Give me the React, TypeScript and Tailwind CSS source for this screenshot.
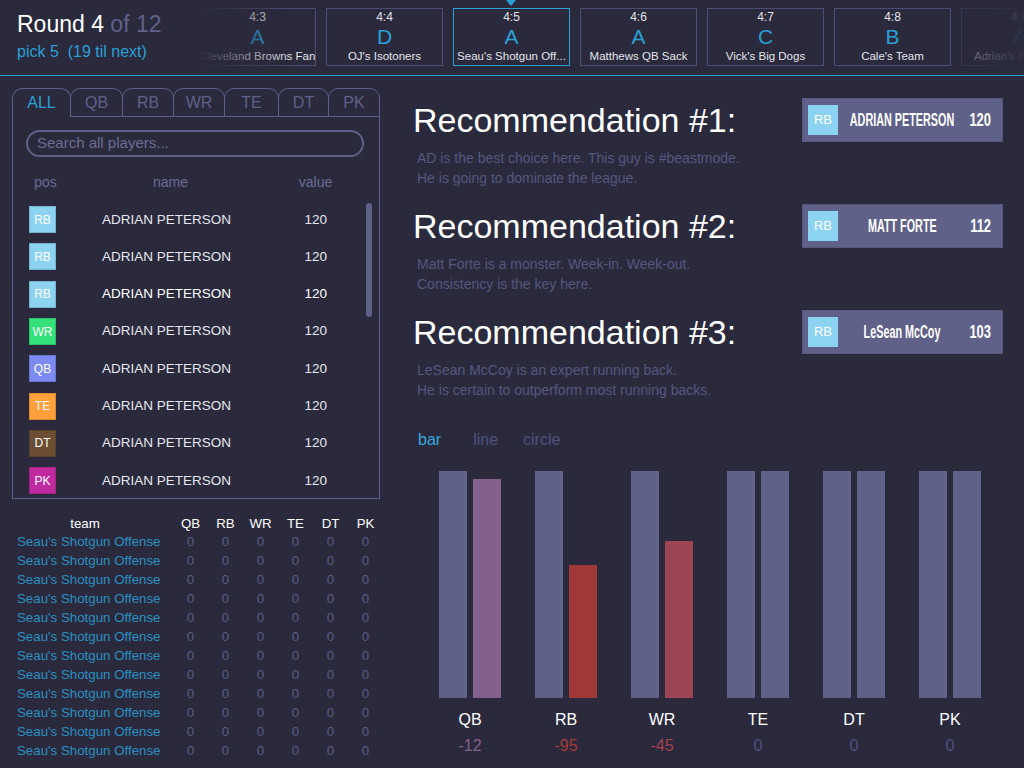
import React from 'react'

// draft board — round header, player list, recommendations and the positional bar chart

const picks = [
  { n: '4:3', grade: 'A', team: 'Cleveland Browns Fan' },
  { n: '4:4', grade: 'D', team: "OJ's Isotoners" },
  { n: '4:5', grade: 'A', team: "Seau's Shotgun Off...", active: true },
  { n: '4:6', grade: 'A', team: 'Matthews QB Sack' },
  { n: '4:7', grade: 'C', team: "Vick's Big Dogs" },
  { n: '4:8', grade: 'B', team: "Cale's Team" },
  { n: '4:9', grade: 'A', team: "Adrian's Big Dogs" },
]

const tabs = [
  { label: 'ALL', w: 'w-[59px]' },
  { label: 'QB', w: 'w-[53px]' },
  { label: 'RB', w: 'w-[52px]' },
  { label: 'WR', w: 'w-[52px]' },
  { label: 'TE', w: 'w-[55px]' },
  { label: 'DT', w: 'w-[51px]' },
  { label: 'PK', w: 'w-[52px]' },
]

const badge: Record<string, string> = {
  RB: 'bg-[#8cd3f2]',
  WR: 'bg-[#34e07a]',
  QB: 'bg-[#7c8bf2]',
  TE: 'bg-[#ffa03a]',
  DT: 'bg-[#6b4e33]',
  PK: 'bg-[#c12a9e]',
}

const players = ['RB', 'RB', 'RB', 'WR', 'QB', 'TE', 'DT', 'PK']

const recs = [
  {
    pos: 'RB',
    name: 'ADRIAN PETERSON',
    value: 120,
    lines: ['AD is the best choice here. This guy is #beastmode.', 'He is going to dominate the league.'],
  },
  {
    pos: 'RB',
    name: 'MATT FORTE',
    value: 112,
    lines: ['Matt Forte is a monster. Week-in. Week-out.', 'Consistency is the key here.'],
  },
  {
    pos: 'RB',
    name: 'LeSean McCoy',
    value: 103,
    lines: ['LeSean McCoy is an expert running back.', 'He is certain to outperform most running backs.'],
  },
]

const chart = [
  { pos: 'QB', h: 219, bar: 'bg-[#84608c]', text: 'text-[#84608c]', delta: '-12' },
  { pos: 'RB', h: 133, bar: 'bg-[#a03838]', text: 'text-[#a83a3a]', delta: '-95' },
  { pos: 'WR', h: 157, bar: 'bg-[#9e4555]', text: 'text-[#a84050]', delta: '-45' },
  { pos: 'TE', h: 227, bar: 'bg-[#5f6189]', text: 'text-[#4f5180]', delta: '0' },
  { pos: 'DT', h: 227, bar: 'bg-[#5f6189]', text: 'text-[#4f5180]', delta: '0' },
  { pos: 'PK', h: 227, bar: 'bg-[#5f6189]', text: 'text-[#4f5180]', delta: '0' },
]

const cols = ['QB', 'RB', 'WR', 'TE', 'DT', 'PK']

function PickCard({ n, grade, team, active }: { n: string; grade: string; team: string; active?: boolean }) {
  return (
    <div
      className={`w-[117px] h-[58px] shrink-0 border flex flex-col items-center ${
        active ? 'border-[#2a9fd6]' : 'border-[#4b4d74]'
      }`}
    >
      <div className="pt-[1px] text-[12px] leading-[14px] text-[#e4e4ea]">{n}</div>
      <div className="mt-[1px] text-[21px] leading-[24px] text-[#2a9fd6]">{grade}</div>
      <div className="text-[11.5px] leading-[14px] text-[#e4e4ea] whitespace-nowrap">{team}</div>
    </div>
  )
}

export default function App() {
  return (
    <div className="w-[1024px] h-[768px] overflow-hidden bg-[#2a2a3c] font-['Liberation_Sans',Arial,sans-serif]">
      {/* header */}
      <header className="h-[76px] border-b border-[#2a9fd6] flex">
        <div className="w-[199px] shrink-0 pl-[17px] pt-[10px]">
          <div className="text-[23px] leading-[28px] text-white whitespace-nowrap">
            Round 4 <span className="text-[#5f6189]">of 12</span>
          </div>
          <div className="mt-[4px] text-[16px] leading-[20px] text-[#2a9fd6] whitespace-pre">pick 5  (19 til next)</div>
        </div>
        <div className="relative flex-1 overflow-hidden">
          <div className="flex gap-[10px] pt-[8px]">
            {picks.map((p) => (
              <PickCard key={p.n} {...p} />
            ))}
          </div>
          <div className="absolute left-[307px] top-0 w-0 h-0 border-l-[5px] border-r-[5px] border-t-[6px] border-l-transparent border-r-transparent border-t-[#2a9fd6]" />
          <div className="absolute left-0 top-0 w-[95px] h-[74px] bg-linear-to-r from-[#2a2a3c] to-[#2a2a3c]/0" />
          <div className="absolute right-0 top-0 w-[66px] h-[74px] bg-linear-to-r from-[#2a2a3c]/60 to-[#2a2a3c]/95" />
        </div>
      </header>

      <div className="flex">
        {/* left column */}
        <div className="w-[380px] shrink-0 pl-[12px] pt-[12px]">
          <div className="flex h-[29px]">
            {tabs.map((t, i) => (
              <div
                key={t.label}
                className={`${t.w} h-[29px] rounded-t-[10px] border-t border-x border-[#5d5f88] flex items-center justify-center text-[16px] ${
                  i === 0 ? 'text-[#2a9fd6]' : 'border-b -ml-px text-[#5f6189]'
                }`}
              >
                {t.label}
              </div>
            ))}
          </div>
          <div className="relative w-[368px] h-[382px] pt-[13px] border-x border-b border-[#5d5f88]">
            <div className="ml-[13px] mr-[15px] h-[27px] rounded-full border-2 border-[#5f6189] pl-[9px] flex items-center text-[15px] text-[#6a6c95]">
              Search all players...
            </div>
            <div className="mt-[16px] flex pl-[8px] text-[14px] leading-[18px] text-[#6a6c95]">
              <div className="w-[49px] text-center">pos</div>
              <div className="w-[201px] text-center">name</div>
              <div className="w-[89px] text-center">value</div>
            </div>
            <div className="mt-[10px]">
              {players.map((pos, i) => (
                <div key={i} className="h-[37.3px] flex items-center pl-[16px]">
                  <div
                    className={`w-[27px] h-[27px] shrink-0 border border-black/15 flex items-center justify-center text-[12px] text-white ${badge[pos]}`}
                  >
                    {pos}
                  </div>
                  <div className={`ml-[46px] w-[180px] text-[13.5px] ${i === 2 ? 'text-white' : 'text-[#e6e6ee]'}`}>
                    ADRIAN PETERSON
                  </div>
                  <div className={`w-[45px] text-right text-[13.5px] ${i === 2 ? 'text-white' : 'text-[#e6e6ee]'}`}>
                    120
                  </div>
                </div>
              ))}
            </div>
            <div className="absolute right-[7px] top-[86px] w-[6px] h-[114px] rounded-full bg-[#5f6189]" />
          </div>

          {/* team table */}
          <div className="mt-[15px] -ml-[12px] pl-[17px] grid grid-cols-[156px_repeat(6,35px)] text-[13.3px]">
            <div className="h-[18px] pr-[20px] text-center text-white">team</div>
            {cols.map((c) => (
              <div key={c} className="h-[18px] text-center text-white">
                {c}
              </div>
            ))}
            {Array.from({ length: 12 }).map((_, r) => (
              <React.Fragment key={r}>
                <div className="h-[19px] leading-[19px] text-[#2b8fc0] whitespace-nowrap">Seau's Shotgun Offense</div>
                {cols.map((c) => (
                  <div key={c} className="h-[19px] leading-[19px] text-center text-[#5a5c85]">
                    0
                  </div>
                ))}
              </React.Fragment>
            ))}
          </div>
        </div>

        {/* right column */}
        <div className="flex-1 pt-[22px]">
          {recs.map((r, i) => (
            <div key={i} className="mb-[16px]">
              <div className="h-[44px] flex items-center pl-[33px]">
                <div className="text-[34px] leading-[40px] text-white whitespace-nowrap">Recommendation #{i + 1}:</div>
                <div className="ml-auto mr-[21px] w-[201px] h-[44px] shrink-0 bg-[#5f6189] border border-[#55577c] flex items-center pl-[5px] pr-[11px]">
                  <div className="w-[30px] h-[30px] shrink-0 bg-[#8cd3f2] flex items-center justify-center text-[13px] text-white">
                    {r.pos}
                  </div>
                  <div className="ml-[5px] w-[118px] shrink-0 flex justify-center text-[18px] font-bold text-white whitespace-nowrap">
                    <span className="inline-block shrink-0 scale-x-[0.6]">{r.name}</span>
                  </div>
                  <div className="ml-auto w-[30px] shrink-0 flex justify-end text-[18px] font-bold text-white">
                    <span className="inline-block shrink-0 scale-x-[0.72] origin-right">{r.value}</span>
                  </div>
                </div>
              </div>
              <div className="mt-[6px] pl-[37px] text-[14px] leading-[20px] text-[#55577f]">
                {r.lines.map((l) => (
                  <div key={l}>{l}</div>
                ))}
              </div>
            </div>
          ))}

          {/* chart */}
          <div className="mt-[30px] pl-[38px] flex text-[16px] leading-[20px]">
            <span className="text-[#35a7de]">bar</span>
            <span className="ml-[32px] text-[#4f5180]">line</span>
            <span className="ml-[25px] text-[#4f5180]">circle</span>
          </div>
          <div className="mt-[21px] pl-[42px] flex">
            {chart.map((c) => (
              <div key={c.pos} className="w-[96px] flex flex-col items-center">
                <div className="h-[227px] flex items-end gap-[6px]">
                  <div className="w-[28px] h-[227px] bg-[#5f6189]" />
                  <div className={`w-[28px] ${c.bar}`} style={{ height: c.h }} />
                </div>
                <div className="mt-[12px] text-[16px] leading-[20px] text-white">{c.pos}</div>
                <div className={`mt-[6px] text-[16px] leading-[20px] ${c.text}`}>{c.delta}</div>
              </div>
            ))}
          </div>
        </div>
      </div>
    </div>
  )
}
